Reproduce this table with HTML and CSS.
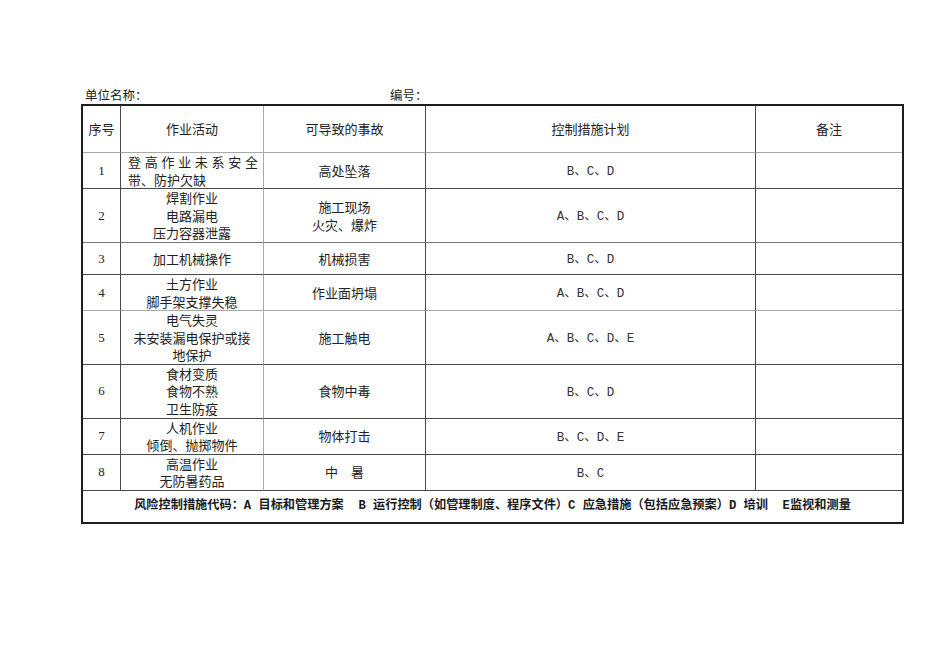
FILE: index.html
```html
<!DOCTYPE html>
<html lang="zh-CN">
<head>
<meta charset="utf-8">
<title>风险控制措施计划</title>
<link rel="stylesheet" href="styles.css">
</head>
<body>
<div class="page">
  <div class="labels">
    <span class="unit">单位名称：</span>
    <span class="code">编号：</span>
  </div>
  <table class="risk">
    <tr class="h-head">
      <td class="c1 gb">序号</td>
      <td class="c2 gb gr">作业活动</td>
      <td class="c3 gb">可导致的事故</td>
      <td class="c4 gb">控制措施计划</td>
      <td class="c5 gb">备注</td>
    </tr>
    <tr class="h-r1">
      <td class="num">1</td>
      <td class="act gr"><span class="just">登高作业未系安全</span><span class="left">带、防护欠缺</span></td>
      <td>高处坠落</td>
      <td class="code-txt">B、C、D</td>
      <td></td>
    </tr>
    <tr class="h-r2">
      <td class="num mb">2</td>
      <td class="gr mb">焊割作业<br>电路漏电<br>压力容器泄露</td>
      <td class="mb">施工现场<br>火灾、爆炸</td>
      <td class="code-txt mb">A、B、C、D</td>
      <td class="mb"></td>
    </tr>
    <tr class="h-r3">
      <td class="num">3</td>
      <td class="gr">加工机械操作</td>
      <td>机械损害</td>
      <td class="code-txt">B、C、D</td>
      <td></td>
    </tr>
    <tr class="h-r4">
      <td class="num gb">4</td>
      <td class="gr gb">土方作业<br>脚手架支撑失稳</td>
      <td class="gb">作业面坍塌</td>
      <td class="code-txt gb">A、B、C、D</td>
      <td class="gb"></td>
    </tr>
    <tr class="h-r5">
      <td class="num">5</td>
      <td class="gr">电气失灵<br>未安装漏电保护或接<br>地保护</td>
      <td>施工触电</td>
      <td class="code-txt">A、B、C、D、E</td>
      <td></td>
    </tr>
    <tr class="h-r6">
      <td class="num">6</td>
      <td class="gr">食材变质<br>食物不熟<br>卫生防疫</td>
      <td>食物中毒</td>
      <td class="code-txt">B、C、D</td>
      <td></td>
    </tr>
    <tr class="h-r7">
      <td class="num">7</td>
      <td class="gr">人机作业<br>倾倒、抛掷物件</td>
      <td>物体打击</td>
      <td class="code-txt">B、C、D、E</td>
      <td></td>
    </tr>
    <tr class="h-r8">
      <td class="num">8</td>
      <td class="gr">高温作业<br>无防暑药品</td>
      <td>中　暑</td>
      <td class="code-txt">B、C</td>
      <td></td>
    </tr>
    <tr class="h-foot">
      <td class="foot" colspan="5">风险控制措施代码：<span class="lt">A </span>目标和管理方案<span class="lt">  B </span>运行控制（如管理制度、程序文件）<span class="lt">C </span>应急措施（包括应急预案）<span class="lt">D </span>培训<span class="lt">  E</span>监视和测量</td>
    </tr>
  </table>
</div>
</body>
</html>
```
FILE: styles.css
```css
html, body {
  margin: 0;
  padding: 0;
  background: #ffffff;
}

body {
  font-family: "Noto Sans CJK SC", "Liberation Serif", sans-serif;
  color: #222222;
  font-size: 13px;
}

.page {
  padding: 86px 0 0 81px;
  width: 823px;
}

.labels {
  display: flex;
  height: 18px;
  line-height: 18px;
  font-size: 12.5px;
  padding-left: 4px;
}

.unit {
  width: 305px;
}

.risk {
  width: 823px;
  table-layout: fixed;
  border-collapse: separate;
  border-spacing: 0;
  border: 2px solid #1e1e1e;
}

.risk td {
  box-sizing: border-box;
  padding: 0 4px;
  text-align: center;
  vertical-align: middle;
  line-height: 17.5px;
  border-right: 1px solid #4a4a4a;
  border-bottom: 1px solid #4a4a4a;
  font-size: 13px;
}

.risk td:last-child {
  border-right: none;
}

.risk td.gr {
  border-right-color: #a8a8a8;
}

.risk td.gb {
  border-bottom-color: #a8a8a8;
}

.risk td.mb {
  border-bottom-color: #7a7a7a;
}

.c1 { width: 38px; }
.c2 { width: 143px; }
.c3 { width: 162px; }
.c4 { width: 330px; }
.c5 { width: 146px; }

.h-head td { height: 47px; }
.h-r1 td { height: 36px; }
.h-r2 td { height: 54px; }
.h-r3 td { height: 32px; }
.h-r4 td { height: 36px; }
.h-r5 td { height: 53px; }
.h-r6 td { height: 54px; }
.h-r7 td { height: 36px; }
.h-r8 td { height: 35px; }
.h-foot td { height: 31px; border-bottom: none; }

.num {
  font-family: "Liberation Serif", serif;
  font-size: 13px;
}

.risk td.act {
  padding: 0 5px 0 7px;
}

.just {
  display: block;
  text-align: justify;
  text-align-last: justify;
}

.left {
  display: block;
  text-align: left;
}

.risk td.code-txt {
  font-family: "Liberation Mono", "Noto Sans CJK SC", monospace;
  font-size: 12.5px;
  padding-top: 5px;
  color: #333333;
}

.risk td.foot {
  font-weight: 700;
  font-size: 12.2px;
  color: #1a1a1a;
}

.lt {
  font-family: "Liberation Mono", monospace;
  white-space: pre;
}
```
